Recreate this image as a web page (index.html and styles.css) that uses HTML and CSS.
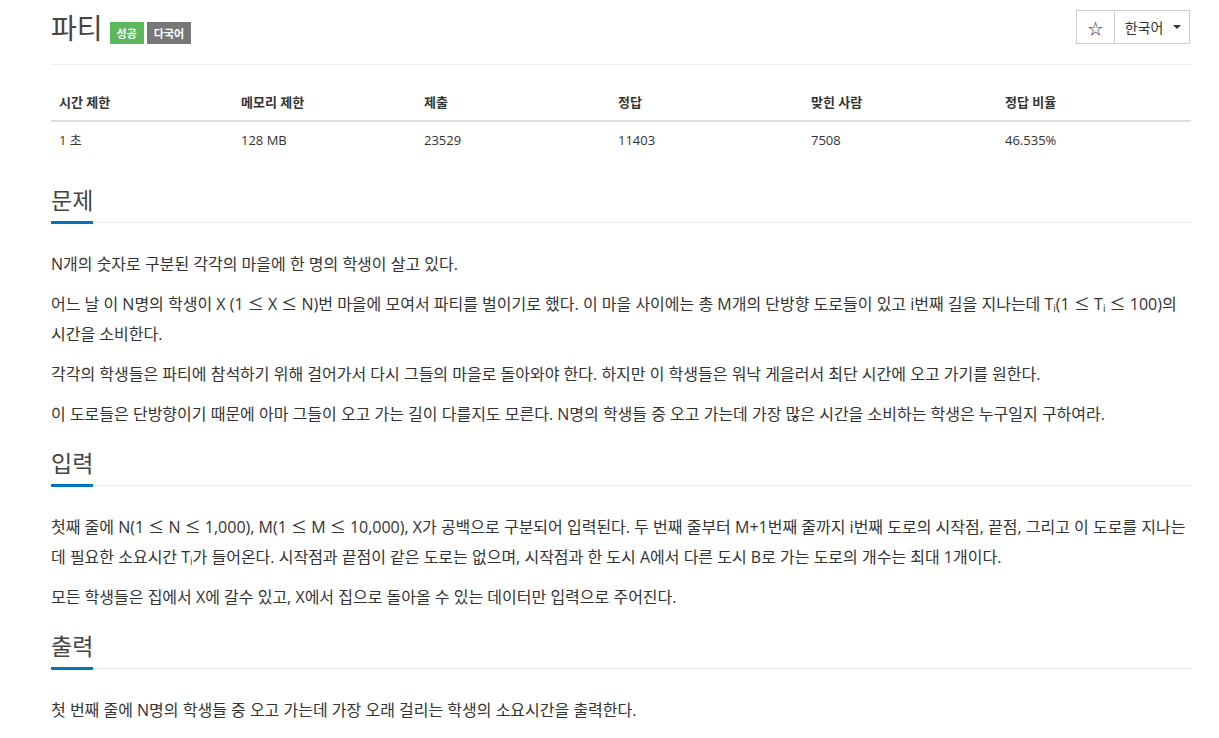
FILE: index.html
```html
<!DOCTYPE html>
<html lang="ko">
<head>
<meta charset="utf-8">
<title>파티</title>
<link rel="stylesheet" href="styles.css">
</head>
<body>
<div class="page">
  <header class="page-header">
    <h1 class="title">
      <span class="title-text">파티</span>
      <span class="badge badge-success">성공</span>
      <span class="badge badge-gray">다국어</span>
    </h1>
    <div class="btn-group">
      <button class="btn btn-star">☆</button>
      <button class="btn btn-lang">한국어 <span class="caret"></span></button>
    </div>
  </header>

  <table class="info-table">
    <thead>
      <tr>
        <th class="c1">시간 제한</th>
        <th class="c2">메모리 제한</th>
        <th class="c3">제출</th>
        <th class="c4">정답</th>
        <th class="c5">맞힌 사람</th>
        <th class="c6">정답 비율</th>
      </tr>
    </thead>
    <tbody>
      <tr>
        <td>1 초</td>
        <td>128 MB</td>
        <td>23529</td>
        <td>11403</td>
        <td>7508</td>
        <td>46.535%</td>
      </tr>
    </tbody>
  </table>

  <section class="section section-first">
    <h2 class="headline"><span>문제</span></h2>
    <div class="body">
      <p>N개의 숫자로 구분된 각각의 마을에 한 명의 학생이 살고 있다.</p>
      <p>어느 날 이 N명의 학생이 X (1 <span class="le">≤</span> X <span class="le">≤</span> N)번 마을에 모여서 파티를 벌이기로 했다. 이 마을 사이에는 총 M개의 단방향 도로들이 있고 i번째 길을 지나는데 T<sub>i</sub>(1 <span class="le">≤</span> T<sub>i</sub> <span class="le">≤</span> 100)의 시간을 소비한다.</p>
      <p>각각의 학생들은 파티에 참석하기 위해 걸어가서 다시 그들의 마을로 돌아와야 한다. 하지만 이 학생들은 워낙 게을러서 최단 시간에 오고 가기를 원한다.</p>
      <p>이 도로들은 단방향이기 때문에 아마 그들이 오고 가는 길이 다를지도 모른다. N명의 학생들 중 오고 가는데 가장 많은 시간을 소비하는 학생은 누구일지 구하여라.</p>
    </div>
  </section>

  <section class="section">
    <h2 class="headline"><span>입력</span></h2>
    <div class="body">
      <p>첫째 줄에 N(1 <span class="le">≤</span> N <span class="le">≤</span> 1,000), M(1 <span class="le">≤</span> M <span class="le">≤</span> 10,000), X가 공백으로 구분되어 입력된다. 두 번째 줄부터 M+1번째 줄까지 i번째 도로의 시작점, 끝점, 그리고 이 도로를 지나는데 필요한 소요시간 T<sub>i</sub>가 들어온다. 시작점과 끝점이 같은 도로는 없으며, 시작점과 한 도시 A에서 다른 도시 B로 가는 도로의 개수는 최대 1개이다.</p>
      <p>모든 학생들은 집에서 X에 갈수 있고, X에서 집으로 돌아올 수 있는 데이터만 입력으로 주어진다.</p>
    </div>
  </section>

  <section class="section">
    <h2 class="headline"><span>출력</span></h2>
    <div class="body">
      <p>첫 번째 줄에 N명의 학생들 중 오고 가는데 가장 오래 걸리는 학생의 소요시간을 출력한다.</p>
    </div>
  </section>
</div>
</body>
</html>
```

FILE: styles.css
```css
* { box-sizing: border-box; }

html, body {
  margin: 0;
  padding: 0;
  background: #fff;
}

body {
  font-family: "Open Sans", "Noto Sans CJK KR", sans-serif;
  color: #333;
  font-size: 14px;
  line-height: 1.43;
}

.page {
  padding: 0 28px 0 51px;
}

.page-header {
  display: flex;
  justify-content: space-between;
  align-items: flex-start;
  padding-top: 10px;
  height: 65px;
  border-bottom: 1px solid #eee;
}

.title {
  margin: 0;
  display: flex;
  align-items: flex-start;
  font-weight: normal;
}

.title-text {
  font-size: 28px;
  line-height: 34px;
  color: #444;
  font-family: "Noto Sans CJK KR", sans-serif;
  margin-right: 7px;
}

.badge {
  display: inline-block;
  margin-top: 12px;
  height: 22px;
  line-height: 22px;
  padding: 0 7px;
  font-size: 11px;
  font-weight: bold;
  color: #fff;
  font-family: "Noto Sans CJK KR", sans-serif;
  margin-right: 3px;
}

.badge-success { background: #5cb85c; }
.badge-gray { background: #777; }

.btn-group {
  display: flex;
  margin-right: 1px;
}

.btn {
  height: 34px;
  background: #fff;
  border: 1px solid #ccc;
  font-family: "Open Sans", "Noto Sans CJK KR", sans-serif;
  font-size: 14px;
  color: #333;
  padding: 0;
  display: flex;
  align-items: center;
  justify-content: center;
}

.btn-star {
  width: 39px;
  font-size: 15px;
}

.btn-lang {
  width: 75px;
  border-left: none;
  gap: 10px;
  padding-left: 2px;
}

.caret {
  display: inline-block;
  width: 0;
  height: 0;
  border-left: 4px solid transparent;
  border-right: 4px solid transparent;
  border-top: 4px solid #333;
}

.info-table {
  width: 100%;
  border-collapse: collapse;
  margin-top: 19px;
  font-size: 13px;
}

.info-table th,
.info-table td {
  text-align: left;
  padding: 8px;
  line-height: 20px;
}

.info-table th {
  font-weight: bold;
  border-bottom: 2px solid #ddd;
}

.info-table .c1 { width: 182px; }
.info-table .c2 { width: 183px; }
.info-table .c3 { width: 194px; }
.info-table .c4 { width: 193px; }
.info-table .c5 { width: 194px; }

.section {
  margin-top: 20px;
}

.section-first {
  margin-top: 28px;
}

.headline {
  margin: 0;
  font-size: 23px;
  font-weight: normal;
  line-height: 26px;
  color: #444;
  font-family: "Noto Sans CJK KR", sans-serif;
  border-bottom: 1px dotted #ddd;
}

.headline span {
  display: inline-block;
  padding-bottom: 9px;
  border-bottom: 3px solid #0076c0;
  margin-bottom: -2px;
}

.body {
  padding-top: 26px;
  font-size: 16px;
  line-height: 30px;
}

.body p {
  margin: 0 0 10px 0;
}

.body p:last-child {
  margin-bottom: 0;
}

.le {
  font-family: "Noto Sans CJK KR", sans-serif;
  line-height: 1;
}

sub {
  font-size: 10px;
  line-height: 0;
  vertical-align: -2px;
}
```
